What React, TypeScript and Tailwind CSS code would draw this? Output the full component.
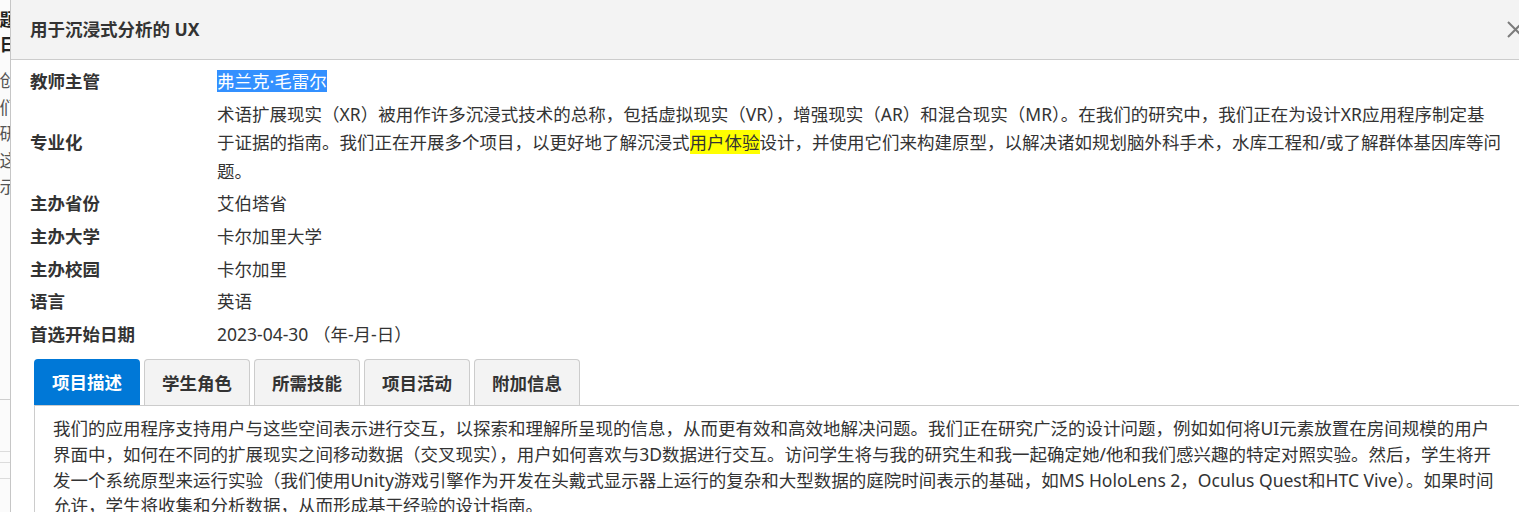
export default function App() {
  const rows: { label: string; value: React.ReactNode }[] = [
    {
      label: "教师主管",
      value: (
        <span className="inline-block bg-[#3390ff] text-white leading-[22px]">弗兰克·毛雷尔</span>
      ),
    },
    {
      label: "专业化",
      value: (
        <span className="whitespace-nowrap">
          术语扩展现实（XR）被用作许多沉浸式技术的总称，包括虚拟现实（VR），增强现实（AR）和混合现实（MR）。在我们的研究中，我们正在为设计XR应用程序制定基
          <br />
          于证据的指南。我们正在开展多个项目，以更好地了解沉浸式
          <span className="bg-[#ffff00]">用户体验</span>
          设计，并使用它们来构建原型，以解决诸如规划脑外科手术，水库工程和/或了解群体基因库等问
          <br />
          题。
        </span>
      ),
    },
    { label: "主办省份", value: "艾伯塔省" },
    { label: "主办大学", value: "卡尔加里大学" },
    { label: "主办校园", value: "卡尔加里" },
    { label: "语言", value: "英语" },
    { label: "首选开始日期", value: "2023-04-30 （年-月-日）" },
  ];
  const tabs = ["项目描述", "学生角色", "所需技能", "项目活动", "附加信息"];
  return (
    <div className="relative w-[1519px] h-[512px] overflow-hidden bg-white font-['Noto_Sans','Noto_Sans_CJK_SC',sans-serif] text-[#333]">
      {/* page behind the dialog */}
      <div className="w-[11px] h-full overflow-hidden bg-[#fbfbfb]">
        <div className="ml-[-183px] w-[200px] text-right text-[17.5px]">
          <div className="pt-[7px] font-bold leading-[25px] text-[#222]">
            <div>研究项目题</div>
            <div>学生项目日</div>
          </div>
          <div className="mt-[10px] leading-[26.5px] text-[#555]">
            <div>学生创</div>
            <div>我们的们</div>
            <div>正在研</div>
            <div>如何这</div>
            <div>图表示</div>
          </div>
        </div>
        <div className="mt-[199px] border-t border-[#cfcfcf]" />
        <div className="mt-[51px] border-t border-[#dcdcdc]" />
        <div className="mt-[10px] border-t border-[#dcdcdc]" />
        <div className="mt-[15px] border-t border-[#dcdcdc]" />
      </div>

      {/* dialog */}
      <div className="absolute left-[10px] top-0 w-[1533px] h-full bg-white border-l border-[#c6c6c6]">
        <div className="h-[60px] bg-[#f3f3f3] border-b border-[#cccccc] flex items-center justify-between px-[19px]">
          <div className="text-[17.5px] font-bold text-[#333]">用于沉浸式分析的 UX</div>
          <svg width="17" height="17" viewBox="0 0 17 17" className="mt-[-1px]">
            <path d="M1 1 L16 16 M16 1 L1 16" stroke="#7b7b7b" strokeWidth="2" fill="none" />
          </svg>
        </div>

        <div className="px-[19px] pt-[5px]">
          <div className="grid grid-cols-[187px_1fr] text-[17.5px]">
            {rows.map((r) => (
              <div key={r.label} className="contents">
                <div className="self-center py-[2px] leading-[28.6px] font-bold text-[#333]">{r.label}</div>
                <div className="py-[2px] leading-[28.6px] text-[#333]">{r.value}</div>
              </div>
            ))}
          </div>

          <div className="mt-[9px] ml-[4px] flex gap-[4px]">
            {tabs.map((t, i) => (
              <div
                key={t}
                className={
                  i === 0
                    ? "w-[106px] h-[46px] flex items-center justify-center rounded-t-[4px] bg-[#0078d7] text-white font-bold text-[17.5px]"
                    : "w-[106px] h-[46px] flex items-center justify-center rounded-t-[4px] bg-[#f3f3f3] border border-b-0 border-[#cccccc] text-[#333] font-bold text-[17.5px]"
                }
              >
                {t}
              </div>
            ))}
          </div>
          <div className="ml-[4px] border-l border-t border-[#cccccc] pl-[18px] pt-[10px] text-[17.5px] leading-[25.7px] text-[#333] whitespace-nowrap">
            我们的应用程序支持用户与这些空间表示进行交互，以探索和理解所呈现的信息，从而更有效和高效地解决问题。我们正在研究广泛的设计问题，例如如何将UI元素放置在房间规模的用户
            <br />
            界面中，如何在不同的扩展现实之间移动数据（交叉现实），用户如何喜欢与3D数据进行交互。访问学生将与我的研究生和我一起确定她/他和我们感兴趣的特定对照实验。然后，学生将开
            <br />
            发一个系统原型来运行实验（我们使用Unity游戏引擎作为开发在头戴式显示器上运行的复杂和大型数据的庭院时间表示的基础，如MS HoloLens 2，Oculus Quest和HTC Vive）。如果时间
            <br />
            允许，学生将收集和分析数据，从而形成基于经验的设计指南。
          </div>
        </div>
      </div>
    </div>
  );
}
